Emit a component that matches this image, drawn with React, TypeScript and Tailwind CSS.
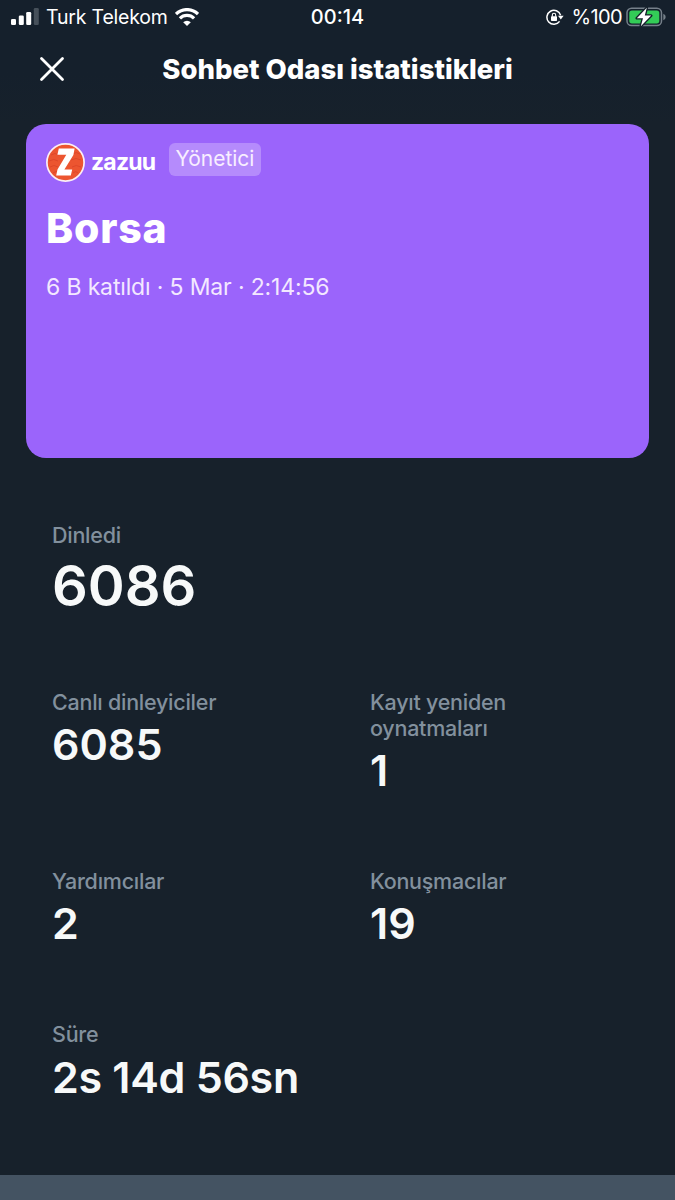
interface StatProps {
  label: string;
  value: string;
  valueClass?: string;
}

function Stat({ label, value, valueClass = "text-[43px] leading-[43px]" }: StatProps) {
  return (
    <div>
      <p className="text-[21.5px] leading-[26px] font-medium tracking-[-0.25px] whitespace-pre-line text-[#82909d]">
        {label}
      </p>
      <p className="mt-2 font-semibold whitespace-nowrap text-[#f7f9f9]">
        <span className={`block ${valueClass}`}>{value}</span>
      </p>
    </div>
  );
}

function SignalIcon() {
  return (
    <svg width="28" height="18" viewBox="0 0 28 18" fill="#fff">
      <rect x="0" y="11" width="5" height="6" rx="1.3" />
      <rect x="7.8" y="7.5" width="5" height="9.5" rx="1.3" />
      <rect x="15.2" y="4" width="5" height="13" rx="1.3" />
      <rect x="22.8" y="0" width="5" height="17" rx="1.3" fill="#46505a" />
    </svg>
  );
}

function WifiIcon() {
  return (
    <svg width="24" height="18" viewBox="0 0 24 18" fill="none" stroke="#fff" strokeWidth="3.2">
      <path d="M1 6.1A15.6 15.6 0 0 1 23 6.1" />
      <path d="M4.9 10.4A10 10 0 0 1 19.1 10.4" />
      <path d="M12 18L8.2 14.2A5.4 5.4 0 0 1 15.8 14.2Z" fill="#fff" stroke="none" />
    </svg>
  );
}

function RotationLockIcon() {
  return (
    <svg width="18" height="17" viewBox="0 0 18 17" fill="none" stroke="#fff" strokeWidth="1.5">
      <path d="M13.6 12.4A7 7 0 1 1 14.6 6.2" />
      <path d="M12 6.8H17.6L14.8 10.4Z" fill="#fff" stroke="none" />
      <rect x="5" y="7.3" width="6" height="4.6" rx=".7" fill="#fff" stroke="none" />
      <path d="M6.3 7.8V6A1.7 1.7 0 0 1 9.7 6V7.8" strokeWidth="1.1" />
    </svg>
  );
}

function BatteryIcon() {
  return (
    <svg width="41" height="20" viewBox="0 0 41 20">
      <rect x="1" y="1.2" width="34.5" height="17.4" rx="4.6" fill="none" stroke="#76808a" strokeWidth="1.5" />
      <path d="M37.3 6.8Q39.7 7.8 39.7 10T37.3 13.2Z" fill="#76808a" />
      <rect x="3.3" y="3.4" width="30" height="13" rx="2.6" fill="#33cc57" />
      <path
        d="M20.8 .8L10.8 11.2H17L14.8 19.2L25.2 8.6H18.8Z"
        fill="#fff"
        stroke="#15202b"
        strokeWidth="2.6"
        strokeLinejoin="round"
        paintOrder="stroke"
      />
    </svg>
  );
}

function Avatar() {
  return (
    <svg width="39" height="39" viewBox="0 0 39 39">
      <circle cx="19.5" cy="19.5" r="18.6" fill="#ec5530" stroke="#fbeef5" strokeWidth="1.7" />
      <g fill="none" stroke="#df4729" strokeWidth="1">
        <path d="M5 12Q9 9 13 12M3 18Q8 15 12 18M4 24Q8 21 12 24M7 30Q10 27 14 30" />
        <path d="M27 11Q30 8 34 11M25 17Q30 14 35 17M26 24Q30 21 35 24M27 30Q30 27 32 30" />
      </g>
      <path d="M12.8 5.6H28.6L27.4 12L18.4 26.6H26.2L24.8 32.6H10.2L11.5 26.6L20.3 11.8H11.4Z" fill="#fff" />
    </svg>
  );
}

function StatusBar() {
  return (
    <div className="grid h-[34px] grid-cols-[1fr_auto_1fr] items-center px-[8px] text-white">
      <div className="flex items-center pl-[3px]">
        <SignalIcon />
        <span className="ml-[7px] pt-px text-[19.5px] tracking-[-0.2px] whitespace-nowrap">Turk Telekom</span>
        <span className="ml-[7px]">
          <WifiIcon />
        </span>
      </div>
      <span className="text-[20px] font-medium">00:14</span>
      <div className="flex items-center justify-end">
        <RotationLockIcon />
        <span className="mr-[4px] ml-[7px] text-[20px] tracking-[-0.6px]">%100</span>
        <BatteryIcon />
      </div>
    </div>
  );
}

export default function App() {
  return (
    <div className="flex h-[1200px] w-[675px] flex-col overflow-hidden bg-[#17212b] font-['Inter',sans-serif]">
      <header className="h-[124px] bg-linear-to-b from-[#15202c] from-60% to-[#17212b]">
        <StatusBar />
        <div className="grid h-[70px] grid-cols-[112px_1fr_112px] items-center">
          <button className="pl-[39px]" aria-label="Kapat">
            <svg width="26" height="26" viewBox="0 0 26 26" stroke="#fff" strokeWidth="2.8" strokeLinecap="round">
              <path d="M2.5 2.5L23.5 23.5M23.5 2.5L2.5 23.5" />
            </svg>
          </button>
          <h1 className="pt-[2px] text-center text-[27.5px] font-extrabold whitespace-nowrap text-white">
            Sohbet Odası istatistikleri
          </h1>
        </div>
      </header>

      <section className="mx-[26px] h-[334px] shrink-0 rounded-[20px] bg-[#9b64fb] px-5 pt-[19px] text-white">
        <div className="flex h-[39px] items-start">
          <Avatar />
          <div className="ml-[6px] w-[78px] text-[23px] leading-[38px] font-bold tracking-[-0.8px]">zazuu</div>
          <span className="flex h-[33px] w-[92px] justify-center rounded-[6px] bg-[#b58bfc] text-[21px] leading-[32px] text-[#f8eeff]">
            Yönetici
          </span>
        </div>
        <h2 className="mt-[21px] text-[41px] leading-[50px] font-extrabold tracking-[0.8px]">Borsa</h2>
        <p className="mt-[19px] text-[23px] leading-[30px] tracking-[-0.15px] whitespace-nowrap text-[#f3e8ff]">
          6 B katıldı · 5 Mar · 2:14:56
        </p>
      </section>

      <main className="mt-[64px] grid grid-cols-[318px_1fr] pl-[52px]">
        <div className="col-span-2 mb-[73px]">
          <Stat label="Dinledi" value="6086" valueClass="text-[56px] leading-[60px]" />
        </div>
        <Stat label="Canlı dinleyiciler" value="6085" />
        <div className="mb-[76px]">
          <Stat label={"Kayıt yeniden\noynatmaları"} value="1" />
        </div>
        <Stat label="Yardımcılar" value="2" />
        <div className="mb-[76px]">
          <Stat label="Konuşmacılar" value="19" />
        </div>
        <div className="col-span-2">
          <Stat label="Süre" value="2s 14d 56sn" valueClass="text-[43px] leading-[44px] tracking-[-0.3px]" />
        </div>
      </main>

      <footer className="mt-auto h-[25px] shrink-0 bg-[#445362]" />
    </div>
  );
}
